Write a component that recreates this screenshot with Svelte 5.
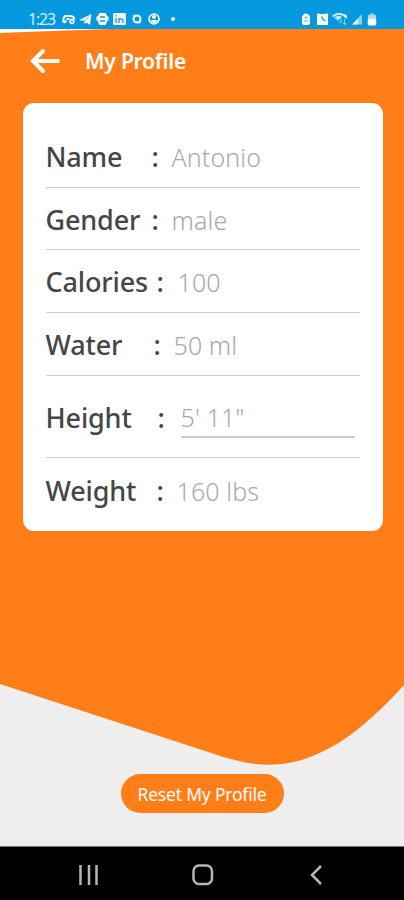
<script lang="ts">
    type Field = {
        label: string;
        value: string;
        colon: number;
        gap: number;
        height: number;
        underlined?: boolean;
    };

    const fields: Field[] = [
        { label: 'Name', value: 'Antonio', colon: 106, gap: 20, height: 63 },
        { label: 'Gender', value: 'male', colon: 106, gap: 20, height: 62 },
        { label: 'Calories', value: '100', colon: 111, gap: 21, height: 63 },
        { label: 'Water', value: '50 ml', colon: 108, gap: 20, height: 63 },
        { label: 'Height', value: '5\' 11"', colon: 112, gap: 23, height: 82, underlined: true },
        { label: 'Weight', value: '160 lbs', colon: 111, gap: 20, height: 63 },
    ];
</script>

<div class="screen">
    <header class="status">
        <span class="clock">1:23</span>
        <svg class="notifications" viewBox="0 0 118 14" fill="none" stroke="#fff">
            <path d="M1.500 10.500C1 6 2 4 4 4h4c2.500 0 4 1 4.500 3.500M1.500 10.500 4.500 9M4.500 7h3" stroke-width="2" />
            <circle cx="10" cy="9.500" r="1.800" stroke-width="1.700" />
            <path d="M17 8 29.500 2 28 13 24.500 10.500 22.500 12V9Z" fill="#fff" stroke="none" />
            <path d="m27 4.500-5 5" stroke="#0598de" stroke-width="0.700" />
            <path d="M37.500 1h6l2 3.500h1v4h-1l-2 4.500h-6l-2-4.500h-1v-4h1Z" fill="#fff" stroke="none" />
            <path d="M38 5h5M38 9h5" stroke="#0598de" stroke-width="1.500" />
            <rect x="51" y="1" width="13" height="12" rx="1" fill="#e9f7fb" stroke="none" />
            <path d="M54 6v5M54 3v1.500M57 11V6m0 3c0-3 4-3 4 0v2" stroke="#3aa9df" stroke-width="1.500" />
            <circle cx="75" cy="7" r="3.500" stroke-width="2" />
            <path d="M71 4.500 73 3M77 11l2-1.500" stroke-width="1.500" />
            <circle cx="92" cy="7" r="5" stroke-width="1.600" />
            <circle cx="92" cy="5" r="1.900" fill="#fff" stroke="none" />
            <path d="M88.500 8h7c-1 4-6 4-7 0Z" fill="#fff" stroke="none" />
            <circle cx="111" cy="7" r="2" fill="#fff" stroke="none" />
        </svg>
        <svg class="system" viewBox="0 0 77 14" fill="none" stroke="#fff">
            <path d="M1 6c0-6 8-6 8 0v5q0 2-2 2h-4q-2 0-2-2Z" fill="#fff" stroke="none" />
            <path d="M3.500 6q1.500-3 3 0ZM3 9h4" stroke="#4eb4df" />
            <rect x="17" y="3" width="9" height="9" stroke-width="2" fill="#fff" />
            <path d="m16 3 2-1.500M25 1.500 27 3" stroke-width="1.500" />
            <path d="M20.500 4.500 22 7.500l2.500 1.500" stroke="#0598de" stroke-width="1.300" />
            <path d="M31.500 4.500q6-5 12-1M34 6q3-2 6 0M36 8l4-4" stroke="#c9eaf3" stroke-width="2" />
            <path d="m42 2 4 1v4l-3-2Z" fill="#e3f4f8" stroke="none" />
            <path d="M40 7v4m0-2-2 2M43.500 7v6m-1.500-2 1.500 2 1.500-2" stroke="#8bd0e9" />
            <path d="M51 12.500 61 2v10.500Z" fill="#8bd0e9" stroke="none" />
            <path d="M51 12.500 57 6.500v6Z" fill="#e3f4f8" stroke="none" />
            <rect x="67" y="2.500" width="8" height="11" rx="1.500" fill="#a9ddef" stroke="none" />
            <path d="M69 2h4M67 7h8v5q0 1-1 1h-6q-1 0-1-1Z" fill="#fff" stroke="#fff" stroke-width="0.500" />
        </svg>
    </header>

    <main class="page">
        <svg class="backdrop" viewBox="0 0 404 817" preserveAspectRatio="none">
            <path d="M0 0H110L0 4Z" fill="#fff" />
            <path d="M0 4Q50 2 110 0H404V656C348 718 297 748 235 731L225 728.500 0 655Z" fill="#ff7e17" />
        </svg>

        <div class="title-bar">
            <button class="back" aria-label="Back">
                <svg viewBox="0 0 30 26" fill="none" stroke="#fff" stroke-width="4" stroke-linecap="round">
                    <path d="M13 3 3 13l10 10" stroke-linejoin="miter" />
                    <path d="M4 13h25.500" stroke-linecap="butt" />
                </svg>
            </button>
            <h1>My Profile</h1>
        </div>

        <section class="card">
            {#each fields as field}
                <div class="field" style="height: {field.height}px">
                    <span class="label" style="width: {field.colon}px">{field.label}</span>
                    <span class="colon" style="width: {field.gap}px">:</span>
                    <span class="value" class:underlined={field.underlined}>{field.value}</span>
                </div>
            {/each}
        </section>

        <button class="reset">Reset My Profile</button>
    </main>

    <nav class="navigation">
        <svg viewBox="0 0 24 24"><path d="M3.500 2v20M12 2v20M19.500 2v20" /></svg>
        <svg viewBox="0 0 24 24"><rect x="2.500" y="2.500" width="18.500" height="18.500" rx="5.500" /></svg>
        <svg viewBox="0 0 24 24"><path d="M17 3 8 12l9 9" /></svg>
    </nav>
</div>

<style>
    :global(body) {
        margin: 0;
    }

    .screen {
        display: flex;
        flex-direction: column;
        width: 404px;
        height: 900px;
        overflow: hidden;
        background: #eee;
        font-family: "Noto Sans", sans-serif;
    }

    .status {
        display: flex;
        flex-shrink: 0;
        align-items: center;
        box-sizing: border-box;
        height: 29px;
        padding: 8px 26px 0 28px;
        background: #0598de;
    }

    .clock {
        width: 34px;
        margin-top: 1px;
        color: #d5f0f7;
        font-size: 16px;
        line-height: 20px;
        letter-spacing: -1.2px;
    }

    .notifications {
        width: 118px;
        height: 14px;
        margin-top: 1px;
    }

    .system {
        width: 77px;
        height: 14px;
        margin-top: 1px;
        margin-left: auto;
    }

    .page {
        position: relative;
        display: flex;
        flex-direction: column;
        flex-shrink: 0;
        align-items: center;
        height: 817px;
        border-bottom: 1px solid #777;
    }

    .backdrop {
        position: absolute;
        inset: 0;
        width: 404px;
        height: 817px;
    }

    .title-bar {
        position: relative;
        display: flex;
        align-items: center;
        align-self: stretch;
        height: 64px;
        padding: 0 30px;
        gap: 25px;
    }

    button {
        border: 0;
        font-family: inherit;
    }

    .back {
        width: 30px;
        height: 26px;
        padding: 0;
        background: none;
    }

    .back svg {
        display: block;
        width: 30px;
        height: 26px;
    }

    h1 {
        margin: 0;
        color: #fff;
        font-size: 21px;
        font-weight: 600;
        letter-spacing: -0.2px;
    }

    .card {
        position: relative;
        box-sizing: border-box;
        width: 360px;
        height: 428px;
        margin: 10px 0 0 1px;
        padding: 22px 23px 0;
        border-radius: 11px;
        background: #fff;
    }

    .field {
        display: flex;
        align-items: center;
        box-sizing: border-box;
        padding-top: 2px;
        border-bottom: 1px solid #ccc;
        font-size: 27px;
        line-height: 38px;
        white-space: nowrap;
    }

    .field:last-child {
        border-bottom: 0;
    }

    .label,
    .colon {
        color: #464646;
        font-weight: 500;
        letter-spacing: -0.15px;
    }

    .value {
        color: #a9a9a9;
        font-size: 25px;
        font-weight: 300;
        letter-spacing: 0.1px;
    }

    .underlined {
        width: 174px;
        border-bottom: 2px solid #ccc;
    }

    .reset {
        position: relative;
        width: 163px;
        height: 39px;
        margin-top: 243px;
        padding: 0;
        border-radius: 20px;
        background: #ff7e17;
        color: #fff;
        font-size: 17.5px;
        letter-spacing: -0.2px;
    }

    .navigation {
        display: flex;
        flex-shrink: 0;
        justify-content: space-between;
        align-items: center;
        box-sizing: border-box;
        height: 53px;
        padding: 3px 76px 0 77px;
        background: #000;
    }

    .navigation svg {
        width: 24px;
        height: 24px;
        fill: none;
        stroke: #b5b5b5;
        stroke-width: 2.5;
    }
</style>
